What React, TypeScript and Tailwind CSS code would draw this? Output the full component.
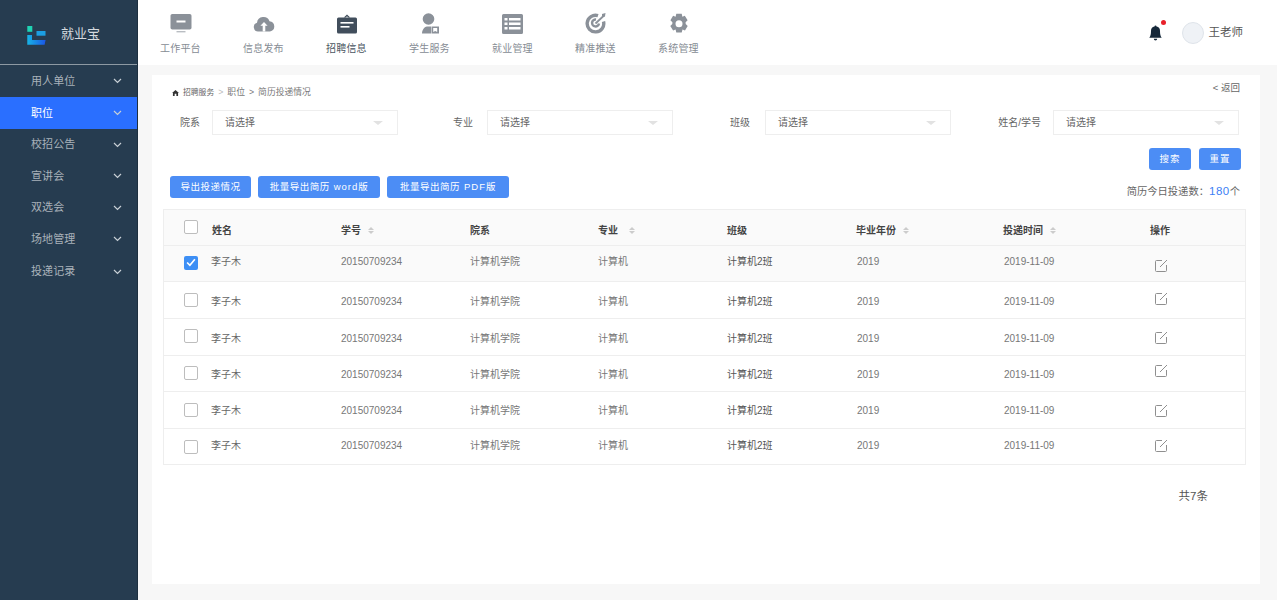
import React from "react";

const FONT = "font-['Liberation_Sans','Noto_Sans_CJK_SC',sans-serif]";

const Chevron = () => (
  <svg width="9" height="6" viewBox="0 0 9 6" fill="none" stroke="currentColor" strokeWidth="1.2" className="text-[#c8d0d6]">
    <path d="M1 1l3.5 3.5L8 1" />
  </svg>
);

const Logo = () => (
  <svg width="19" height="19" viewBox="0 0 19 19">
    <defs>
      <linearGradient id="lg" x1="0" y1="0" x2="1" y2="0">
        <stop offset="0" stopColor="#17b4e6" />
        <stop offset="1" stopColor="#1a55e6" />
      </linearGradient>
    </defs>
    <rect x="0.3" y="0" width="5" height="5.800" fill="#1fd3b4" />
    <path d="M0.300 9h4.700v5h13.600l-1 4.700H0.300z" fill="url(#lg)" />
    <rect x="9.500" y="5" width="9" height="4.700" fill="#1c9fe2" />
  </svg>
);

const IconMonitor = () => (
  <svg width="22" height="20" viewBox="0 0 22 20" fill="#8b9199">
    <rect x="0.5" y="0" width="21" height="15.5" rx="1.8" />
    <rect x="6.5" y="6.5" width="9" height="2" fill="#fff" />
    <rect x="6.5" y="17" width="9" height="1.4" fill="#b9bdc2" />
  </svg>
);
const IconCloud = () => (
  <svg width="22" height="20" viewBox="0 0 22 20" fill="#8b9199">
    <path d="M5 17.5A4.5 4.5 0 0 1 4 8.7 6.5 6.5 0 0 1 16.5 7.2 5.2 5.2 0 0 1 17 17.5z" />
    <path d="M11 8l3.6 3.8h-2.3v5.7H9.700v-5.700H7.400z" fill="#fff" />
  </svg>
);
const IconBrief = () => (
  <svg width="22" height="20" viewBox="0 0 22 20" fill="#414e5c">
    <path d="M7.800 3.500L11 .4l3.200 3.100h-1.900L11 2.200 9.700 3.500z" />
    <path d="M2.500 3.500h17a1.500 1.500 0 0 1 1.500 1.500v13a1.500 1.500 0 0 1-1.500 1.500h-17A1.500 1.500 0 0 1 1 18V5a1.500 1.500 0 0 1 1.500-1.500z" />
    <rect x="4.500" y="8" width="13" height="1.600" fill="#fff" />
    <rect x="4.500" y="12" width="9" height="1.600" fill="#fff" />
  </svg>
);
const IconStudent = () => (
  <svg width="22" height="21" viewBox="0 0 22 21" fill="#8b9199">
    <circle cx="9.500" cy="6" r="5.800" />
    <path d="M3 20.500c0-3.500 2-6.500 5-7h4v7z" />
    <path fillRule="evenodd" d="M12.500 13.500h7.500v7h-7.500zM14.200 15v4l2-1 2 1v-4z" />
  </svg>
);
const IconList = () => (
  <svg width="21" height="20" viewBox="0 0 21 20" fill="#8b9199">
    <path
      fillRule="evenodd"
      d="M1.500 0h18A1.500 1.500 0 0 1 21 1.500v17a1.500 1.500 0 0 1-1.500 1.500h-18A1.500 1.500 0 0 1 0 18.500v-17A1.500 1.500 0 0 1 1.500 0zM2.500 4v2.500h3V4zM7 4v2.500h11.500V4zM2.500 8.500V11h3V8.500zM7 8.500V11h11.500V8.500zM2.500 13v2.500h3V13zM7 13v2.500h11.500V13z"
    />
  </svg>
);
const IconTarget = () => (
  <svg width="22" height="21" viewBox="0 0 22 21" fill="none" stroke="#8b9199">
    <path d="M18.500 8.500A8.300 8.300 0 1 1 13 2.700" strokeWidth="3.400" />
    <path d="M14 10.500a3.500 3.500 0 1 1-3-4" strokeWidth="2.400" />
    <path d="M10.500 10.500L19 2.500" strokeWidth="1.800" />
    <path d="M17 1l3.500-1-.5 3.500-3 1z" fill="#8b9199" stroke="none" />
  </svg>
);
const IconGear = () => (
  <svg width="22" height="22" viewBox="0 0 22 22" fill="#8b9199">
    <path
      fillRule="evenodd"
      d="M8.300.8h5.400l.7 3 2.400-1 2.800 4.400-2 2 .1 1.800 2 2-2.700 4.500-2.500-1-.8 3H8.300l-.7-3-2.500 1L2.300 13l2-2 .1-1.800-2-2L5.100 2.800l2.500 1zM11 7.200a3.500 3.500 0 1 0 0 7 3.500 3.500 0 0 0 0-7z"
    />
  </svg>
);

const nav = [
  { label: "工作平台", icon: <IconMonitor />, active: false },
  { label: "信息发布", icon: <IconCloud />, active: false },
  { label: "招聘信息", icon: <IconBrief />, active: true },
  { label: "学生服务", icon: <IconStudent />, active: false },
  { label: "就业管理", icon: <IconList />, active: false },
  { label: "精准推送", icon: <IconTarget />, active: false },
  { label: "系统管理", icon: <IconGear />, active: false },
];

const side = [
  { label: "用人单位", h: "h-[32px]" },
  { label: "职位", h: "h-[32px]", active: true },
  { label: "校招公告", h: "h-[31px]" },
  { label: "宣讲会", h: "h-[32px]" },
  { label: "双选会", h: "h-[31px]" },
  { label: "场地管理", h: "h-[32px]" },
  { label: "投递记录", h: "h-[33px]" },
];

const Select = ({ label, labelClass }: { label: string; labelClass: string }) => (
  <div className="flex items-center">
    <span className={`text-[10px] text-[#666] text-right whitespace-nowrap shrink-0 ${labelClass}`}>{label}</span>
    <div className="w-[186px] h-[25px] border border-[#eeeeee] bg-white flex items-center justify-between pl-[12px] pr-[14px] text-[10px] text-[#666]">
      <span>请选择</span>
      <span className="w-0 h-0 border-x-[5px] border-x-transparent border-t-[4px] border-t-[#e2e2e2]" />
    </div>
  </div>
);

const Btn = ({ children, className }: { children: React.ReactNode; className: string }) => (
  <button className={`h-[22px] rounded-[3px] bg-[#4c8df5] text-white text-[9.500px] flex items-center justify-center whitespace-nowrap ${className}`}>
    {children}
  </button>
);

const Sort = ({ wide }: { wide: boolean }) => (
  <span className={`inline-flex flex-col gap-[1px] ${wide ? "ml-[11px]" : "ml-[7px]"}`}>
    <span className="w-0 h-0 border-x-[3.500px] border-x-transparent border-b-[3px] border-b-[#cccccc]" />
    <span className="w-0 h-0 border-x-[3.500px] border-x-transparent border-t-[3px] border-t-[#cccccc]" />
  </span>
);

const Check = ({ on, className }: { on?: boolean; className?: string }) =>
  on ? (
    <span className={`w-[14px] h-[14px] rounded-[2px] bg-[#3d8ff5] flex items-center justify-center ${className ?? ""}`}>
      <svg width="10" height="9" viewBox="0 0 9 8" fill="none" stroke="#fff" strokeWidth="1.500">
        <path d="M1 4l2.500 2.500L8 1" />
      </svg>
    </span>
  ) : (
    <span className={`w-[14px] h-[14px] rounded-[2px] border border-[#bdbdbd] bg-white block ${className ?? ""}`} />
  );

const Edit = () => (
  <svg width="13" height="13" viewBox="0 0 13 13" fill="none" stroke="#8f8f8f" strokeWidth="1">
    <path d="M7 1.500H1.500a1 1 0 0 0-1 1v9a1 1 0 0 0 1 1h9a1 1 0 0 0 1-1V6" />
    <path d="M5 8l7-7" />
  </svg>
);

const cols = "grid grid-cols-[48px_129px_129px_128px_129px_129px_147px_147px_97px]";

const heads: [string, boolean][] = [
  ["姓名", false],
  ["学号", true],
  ["院系", false],
  ["专业", true],
  ["班级", false],
  ["毕业年份", true],
  ["投递时间", true],
  ["操作", false],
];

const rows = [
  { h: "h-[36px]", t: "-translate-y-[2px]", i: "translate-y-[2px]", c: "-translate-y-[1px]", bg: "bg-[#fafafa]", on: true },
  { h: "h-[37px]", t: "translate-y-[1px]", i: "-translate-y-[2px]", c: "", bg: "bg-white" },
  { h: "h-[37px]", t: "translate-y-[1px]", i: "", c: "-translate-y-[1px]", bg: "bg-white" },
  { h: "h-[36px]", t: "translate-y-[1px]", i: "-translate-y-[3px]", c: "-translate-y-[1px]", bg: "bg-white" },
  { h: "h-[37px]", t: "", i: "", c: "", bg: "bg-white" },
  { h: "h-[35px]", t: "-translate-y-[1px]", i: "-translate-y-[1px]", c: "", bg: "bg-white" },
];

export default function App() {
  return (
    <div className={`${FONT} w-[1277px] h-[600px] flex overflow-hidden bg-[#f7f7f7]`}>
      <aside className="w-[138px] h-full bg-[#263c50] border-r border-[#1d2f3f] shrink-0 flex flex-col">
        <div className="h-[65px] border-b border-[#8d99a3] flex items-center pl-[27px] gap-[15px] pt-[6px] shrink-0">
          <Logo />
          <span className="text-[13px] text-[#d5dadf] -translate-y-[1px]">就业宝</span>
        </div>
        {side.map((s) => (
          <div
            key={s.label}
            className={`${s.h} flex items-center justify-between pl-[31px] pr-[15px] text-[11px] tracking-[0.1px] ${
              s.active ? "bg-[#2a6fff] text-white" : "text-[#a9b2ba]"
            }`}
          >
            <span>{s.label}</span>
            <Chevron />
          </div>
        ))}
      </aside>

      <div className="flex-1 min-w-0 flex flex-col">
        <header className="h-[65px] bg-white flex items-start justify-between shrink-0 pl-[22px] pr-[34px]">
          <div className="flex pt-[13px]">
            {nav.map((n) => (
              <div key={n.label} className="w-[83px] flex flex-col items-start">
                <div className="w-[41px] h-[21px] flex items-center justify-center">{n.icon}</div>
                <span className={`mt-[7px] text-[10px] tracking-[0.2px] ${n.active ? "text-[#4a5561]" : "text-[#868c94]"}`}>
                  {n.label}
                </span>
              </div>
            ))}
          </div>
          <div className="flex items-center h-full pt-[1px]">
            <div className="relative mr-[19px]">
              <svg width="15" height="16" viewBox="0 0 15 16" fill="#16283a" className="block">
                <path d="M7.500 0.500a1 1 0 0 1 1 1 4.500 4.500 0 0 1 3.500 4.500c0 3.500.500 5 1.700 6.800H1.300C2.500 11 3 9.500 3 6a4.500 4.500 0 0 1 3.500-4.500 1 1 0 0 1 1-1z" />
                <path d="M5.800 13.800h3.400a1.700 1.700 0 0 1-3.400 0z" />
              </svg>
              <span className="absolute -top-[5px] -right-[3px] w-[5px] h-[5px] rounded-full bg-[#e8202a]" />
            </div>
            <span className="w-[22px] h-[22px] rounded-full bg-[#eff2f6] border border-[#dfe4ea] mr-[5px]" />
            <span className="text-[11.500px] text-[#555]">王老师</span>
          </div>
        </header>

        <main className="flex-1 min-h-0 pt-[10px] pl-[14px] pr-[17px] pb-[16px]">
          <div className="h-full bg-white pl-[11px] pr-[14px] flex flex-col">
            <div className="flex justify-between items-start pl-[9px] pr-[6px] h-[35px] shrink-0">
              <div className="flex items-center h-[35px] text-[8.800px] text-[#777]">
                <svg width="7" height="6" viewBox="0 0 8 7" fill="#333" className="mr-[4px]">
                  <path d="M4 0l4 3.500H7V7H5V4.500H3V7H1V3.500H0z" />
                </svg>
                <span className="text-[7.800px] text-[#666]">招聘服务</span>
                <span className="text-[#bbb] mx-[4px]">&gt;</span>
                <span>职位</span>
                <span className="mx-[4px]">&gt;</span>
                <span>简历投递情况</span>
              </div>
              <span className="text-[9.500px] text-[#666] pt-[6px]">&lt; 返回</span>
            </div>

            <div className="flex">
              <Select label="院系" labelClass="w-[49px] pr-[12px]" />
              <Select label="专业" labelClass="w-[89px] pr-[14px]" />
              <Select label="班级" labelClass="w-[92px] pr-[15px]" />
              <Select label="姓名/学号" labelClass="w-[102px] pr-[12px]" />
            </div>

            <div className="flex justify-end gap-[8px] pr-[5px] mt-[13px]">
              <Btn className="w-[42px] tracking-[1px]">搜索</Btn>
              <Btn className="w-[42px] tracking-[1px]">重置</Btn>
            </div>

            <div className="flex items-start justify-between h-[22px] mt-[6px] pl-[7px] pr-[6px]">
              <div className="flex gap-[7px]">
                <Btn className="w-[81px] tracking-[0.5px]">导出投递情况</Btn>
                <Btn className="w-[122px] tracking-[0.5px]">
                  批量导出简历<span className="ml-[4px] tracking-[1px]"> word</span>版
                </Btn>
                <Btn className="w-[122px] tracking-[0.5px]">
                  批量导出简历<span className="ml-[4px] tracking-[1px]"> PDF</span>版
                </Btn>
              </div>
              <div className="text-[10.300px] leading-[16px] text-[#666] pt-[7px]">
                简历今日投递数：<span className="text-[#3d7ff5] text-[11.500px] tracking-[0.5px]">180</span>个
              </div>
            </div>

            <div className="mt-[11px] border border-[#eeeeee] w-[1083px]">
              <div className={`${cols} h-[36px] bg-[#fafafa] border-b border-[#eeeeee] items-center text-[10px] font-bold text-[#444]`}>
                <div className="pl-[20px]">
                  <Check className="-translate-y-[1px]" />
                </div>
                {heads.map(([h, s]) => (
                  <div key={h} className="flex items-center translate-y-[3px]">
                    {h}
                    {s && <Sort wide={h === "专业"} />}
                  </div>
                ))}
              </div>
              {rows.map((r, i) => (
                <div key={i} className={`${cols} ${r.h} ${r.bg} ${i < 5 ? "border-b border-[#eeeeee]" : ""} items-center text-[10px] text-[#777]`}>
                  <div className={`pl-[20px] ${r.c}`}>
                    <Check on={r.on} />
                  </div>
                  <div className={`-ml-[1px] text-[#666] ${r.t}`}>李子木</div>
                  <div className={r.t}>20150709234</div>
                  <div className={r.t}>计算机学院</div>
                  <div className={r.t}>计算机</div>
                  <div className={`text-[#555] ${r.t}`}>计算机2班</div>
                  <div className={`pl-[1px] ${r.t}`}>2019</div>
                  <div className={`pl-[1px] ${r.t}`}>2019-11-09</div>
                  <div className={`pl-[5px] ${r.i}`}>
                    <Edit />
                  </div>
                </div>
              ))}
            </div>

            <div className="flex justify-end pr-[38px] mt-[23px] text-[11.500px] text-[#555]">共7条</div>
          </div>
        </main>
      </div>
    </div>
  );
}
